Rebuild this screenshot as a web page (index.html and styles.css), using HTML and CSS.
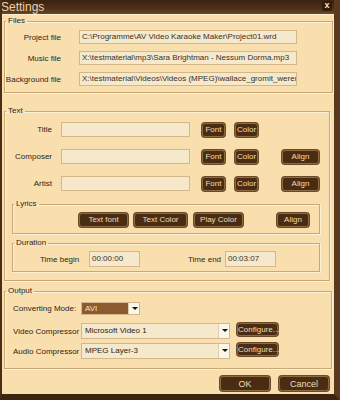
FILE: index.html
```html
<!DOCTYPE html>
<html>
<head>
<title>Settings</title>
<link rel="stylesheet" href="styles.css">
</head>
<body>

<div class="window">
  <div class="titleBar">
    <span class="titleText">Settings</span>
    <span class="closeButton">x</span>
  </div>

  <div class="windowBody">

    <!-- files -->
    <fieldset class="group filesGroup">
      <legend>Files</legend>
      <div class="fileRow">
        <label>Project file</label>
        <div class="field">C:\Programme\AV Video Karaoke Maker\Project01.wrd</div>
      </div>
      <div class="fileRow">
        <label>Music file</label>
        <div class="field">X:\testmaterial\mp3\Sara Brightman - Nessum Dorma.mp3</div>
      </div>
      <div class="fileRow">
        <label>Background file</label>
        <div class="field">X:\testmaterial\Videos\Videos (MPEG)\wallace_gromit_wererabbi</div>
      </div>
    </fieldset>

    <!-- text -->
    <fieldset class="group textGroup">
      <legend>Text</legend>
      <div class="textRow">
        <label>Title</label>
        <div class="field textField"></div>
        <button class="fontButton">Font</button>
        <button class="colorButton">Color</button>
      </div>
      <div class="textRow">
        <label>Composer</label>
        <div class="field textField"></div>
        <button class="fontButton">Font</button>
        <button class="colorButton">Color</button>
        <button class="alignButton">Align</button>
      </div>
      <div class="textRow">
        <label>Artist</label>
        <div class="field textField"></div>
        <button class="fontButton">Font</button>
        <button class="colorButton">Color</button>
        <button class="alignButton">Align</button>
      </div>

      <fieldset class="group lyricsGroup">
        <legend>Lyrics</legend>
        <div class="lyricsRow">
          <button class="textFontButton">Text font</button>
          <button class="textColorButton">Text Color</button>
          <button class="playColorButton">Play Color</button>
          <button class="lyricsAlignButton">Align</button>
        </div>
      </fieldset>

      <fieldset class="group durationGroup">
        <legend>Duration</legend>
        <div class="durationRow">
          <label class="beginLabel">Time begin</label>
          <div class="field timeField">00:00:00</div>
          <label class="endLabel">Time end</label>
          <div class="field timeField">00:03:07</div>
        </div>
      </fieldset>
    </fieldset>

    <!-- output -->
    <fieldset class="group outputGroup">
      <legend>Output</legend>
      <div class="outputRow modeRow">
        <label>Converting Mode:</label>
        <div class="select modeSelect">
          <span class="selectValue">AVI</span>
          <span class="selectArrow"></span>
        </div>
      </div>
      <div class="outputRow videoRow">
        <label>Video Compressor</label>
        <div class="select compressorSelect">
          <span class="selectValue">Microsoft Video 1</span>
          <span class="selectArrow"></span>
        </div>
        <button class="configureButton">Configure...</button>
      </div>
      <div class="outputRow audioRow">
        <label>Audio Compressor</label>
        <div class="select compressorSelect">
          <span class="selectValue">MPEG Layer-3</span>
          <span class="selectArrow"></span>
        </div>
        <button class="configureButton">Configure...</button>
      </div>
    </fieldset>

    <div class="dialogButtons">
      <button class="okButton">OK</button>
      <button class="cancelButton">Cancel</button>
    </div>

  </div>
</div>

</body>
</html>
```

FILE: styles.css
```css
:root {
  --bg-color: #f9dfae;
  --frame-color: #4a2d14;
  --title-top: #3a2310;
  --title-bottom: #6b4824;
  --line-dark: #c9a878;
  --line-light: #fff2d4;
  --field-bg: #f6e8cb;
  --field-border: #d3b689;
  --button-bg: #4a2c12;
  --button-border: #8c6a42;
  --button-text: #f0dcb4;
  --text-color: #2e2418;
}

* {
  box-sizing: border-box;
}

body {
  margin: 0;
  background-color: #5b3a1c;
  font-family: "Liberation Sans Narrow", "Liberation Sans", Arial, sans-serif;
  font-size: 8px;
  color: var(--text-color);
}

.window {
  width: 340px;
  height: 400px;
  background-color: var(--bg-color);
  border-left: 2px solid var(--frame-color);
  border-right: 6px solid #5a3a1c;
  border-bottom: 6px solid #3b2410;
  overflow: hidden;
}

.titleBar {
  height: 15px;
  background: linear-gradient(to bottom, var(--title-top), #4e3018 60%, var(--title-bottom));
  border-bottom: 1px solid #fff0d0;
  display: flex;
  align-items: center;
  justify-content: space-between;
  margin-left: -2px;
  margin-right: -6px;
}

.titleText {
  font-family: "Liberation Sans Narrow", "Liberation Sans", Arial, sans-serif;
  font-size: 12px;
  color: #e9d4ae;
  line-height: 12px;
  margin-top: -1px;
  padding-left: 1px;
}

.closeButton {
  width: 10px;
  height: 10px;
  margin-right: 8px;
  margin-top: -3px;
  background-color: #2e1c0c;
  color: #f4e4c8;
  font-family: "Liberation Sans", Arial, sans-serif;
  font-size: 9px;
  font-weight: bold;
  line-height: 9px;
  text-align: center;
  border-radius: 2px;
}

.windowBody {
  padding: 1px 0 0 2px;
}

/* group boxes */
.group {
  margin: 0;
  padding: 0;
  border: 1px solid var(--line-dark);
  box-shadow: inset 1px 1px 0 var(--line-light), 1px 1px 0 var(--line-light);
  min-width: 0;
}

.group legend {
  padding: 0 2px;
  margin-left: 1px;
  line-height: 10px;
  height: 10px;
  font-size: 8px;
}

label {
  white-space: nowrap;
}

.field {
  height: 14px;
  background-color: var(--field-bg);
  border: 1px solid var(--field-border);
  padding: 0 2px;
  line-height: 12px;
  white-space: nowrap;
  overflow: hidden;
  color: #3a3026;
}

button {
  height: 14px;
  padding: 0;
  background-color: var(--button-bg);
  color: var(--button-text);
  border: 1px solid var(--button-border);
  border-radius: 3px;
  box-shadow: 0 0 0 1px #6b4a28;
  font-family: "Liberation Sans Narrow", "Liberation Sans", Arial, sans-serif;
  font-size: 8px;
  line-height: 12px;
}

/* files */
.filesGroup {
  width: 329px;
  padding: 4px 0 6px 0;
  display: flex;
  flex-direction: column;
  gap: 7px;
}

.fileRow {
  display: flex;
  align-items: center;
}

.fileRow label {
  width: 56px;
  text-align: right;
}

.fileRow .field {
  width: 218px;
  margin-left: 18px;
}

/* text */
.textGroup {
  width: 326px;
  margin-top: 13px;
  padding: 6px 0 8px 0;
}

.textRow {
  display: flex;
  align-items: center;
  height: 15px;
  margin-bottom: 12px;
}

.textRow:nth-of-type(3) {
  margin-bottom: 0;
}

.textRow label {
  width: 47px;
  text-align: right;
}

.textField {
  width: 129px;
  height: 15px;
  margin-left: 9px;
}

.fontButton {
  width: 23px;
  margin-left: 12px;
}

.colorButton {
  width: 23px;
  margin-left: 10px;
}

.alignButton {
  width: 37px;
  margin-left: 24px;
}

.lyricsGroup {
  width: 308px;
  margin: 8px 0 0 7px;
  padding: 4px 0 6px 0;
}

.lyricsRow {
  display: flex;
  align-items: center;
}

.textFontButton {
  width: 49px;
  margin-left: 66px;
}

.textColorButton {
  width: 53px;
  margin-left: 6px;
}

.playColorButton {
  width: 49px;
  margin-left: 7px;
}

.lyricsAlignButton {
  width: 32px;
  margin-left: 34px;
}

.durationGroup {
  width: 308px;
  margin: 4px 0 0 7px;
  padding: 3px 0 4px 0;
}

.durationRow {
  display: flex;
  align-items: center;
}

.timeField {
  width: 51px;
  height: 16px;
  line-height: 14px;
}

.beginLabel {
  width: 40px;
  margin-left: 27px;
  margin-right: 9px;
}

.endLabel {
  width: 32px;
  margin-left: 48px;
  margin-right: 5px;
}

/* output */
.outputGroup {
  width: 328px;
  margin-top: 5px;
  padding: 6px 0 9px 0;
}

.outputRow {
  display: flex;
  align-items: center;
}

.outputRow label {
  width: 68px;
  margin-left: 8px;
  overflow: hidden;
}

.videoRow {
  margin-top: 8px;
}

.audioRow {
  margin-top: 4px;
}

.select {
  display: flex;
  height: 15px;
  border: 1px solid var(--field-border);
  background-color: var(--field-bg);
}

.selectValue {
  flex-grow: 1;
  padding-left: 3px;
  line-height: 13px;
  white-space: nowrap;
}

.selectArrow {
  width: 11px;
  background-color: #fbf6ea;
  border-left: 1px solid #e0d0b0;
  position: relative;
}

.selectArrow::after {
  content: "";
  position: absolute;
  left: 3px;
  top: 5px;
  border-left: 3px solid transparent;
  border-right: 3px solid transparent;
  border-top: 3px solid #111111;
}

.modeSelect {
  width: 59px;
  height: 13px;
}

.modeSelect .selectValue {
  background-color: #8b5a2e;
  color: #f4e2c2;
  line-height: 11px;
}

.modeSelect .selectArrow::after {
  top: 4px;
}

.compressorSelect {
  width: 149px;
  height: 16px;
}

.compressorSelect .selectValue {
  line-height: 14px;
}

.configureButton {
  width: 41px;
  height: 13px;
  line-height: 11px;
  margin-left: 7px;
  align-self: flex-start;
}

.dialogButtons {
  display: flex;
  justify-content: flex-end;
  gap: 9px;
  padding: 7px 5px 0 0;
}

.okButton,
.cancelButton {
  width: 50px;
  height: 15px;
  font-size: 9px;
}
```
